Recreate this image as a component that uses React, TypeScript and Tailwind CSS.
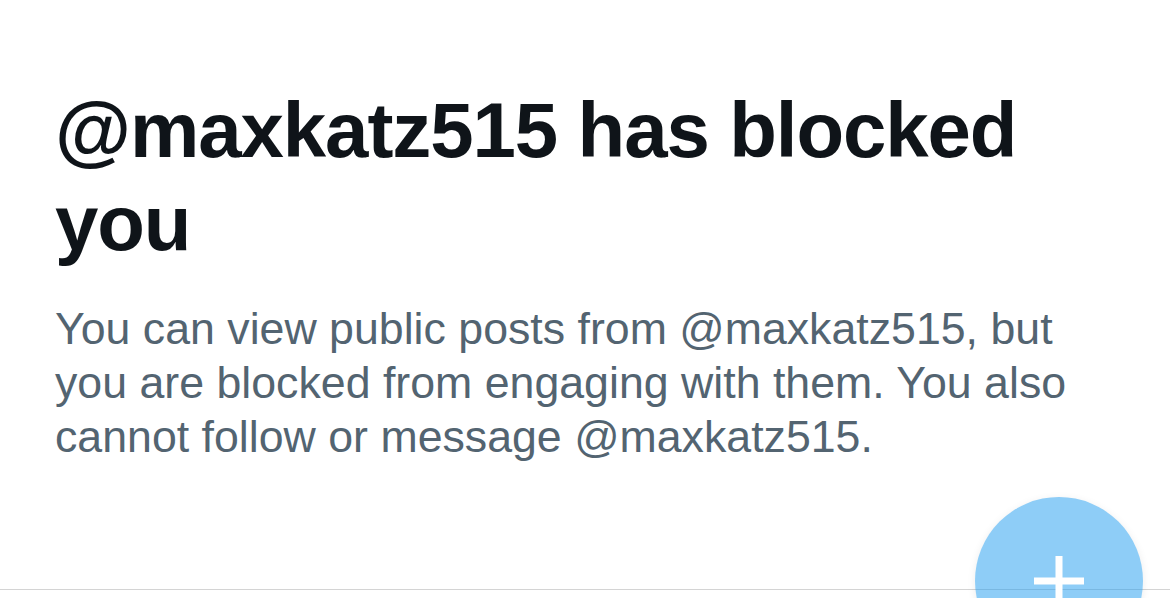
export default function App() {
  return (
    <div className="relative flex h-[598px] w-[1170px] flex-col overflow-hidden bg-white font-['Liberation_Sans',Arial,sans-serif]">
      <div className="px-[55px] pt-[84px]">
        <h1 className="text-[78px] font-bold leading-[93px] tracking-[-0.014em] text-[#0f1419]">
          @maxkatz515 has blocked you
        </h1>
        <p className="mt-[32px] text-[44.7px] leading-[54px] text-[#536471]">
          You can view public posts from @maxkatz515, but you are blocked from engaging with them. You also cannot follow or message @maxkatz515.
        </p>
      </div>

      <div className="flex-1" />
      {/* bottom bar edge */}
      <div className="h-[9px] border-t border-[#d4d4d4]" />

      {/* compose button, disabled look */}
      <div className="absolute left-[975px] top-[497px] grid h-[168px] w-[168px] place-items-center rounded-full bg-[#1d9bf0]/50 shadow-[0_2px_8px_rgba(0,0,0,0.08)]">
        <svg width="50" height="50" viewBox="0 0 50 50" className="text-white">
          <path d="M25 0v50M0 25h50" stroke="currentColor" strokeWidth="7" />
        </svg>
      </div>
    </div>
  );
}
